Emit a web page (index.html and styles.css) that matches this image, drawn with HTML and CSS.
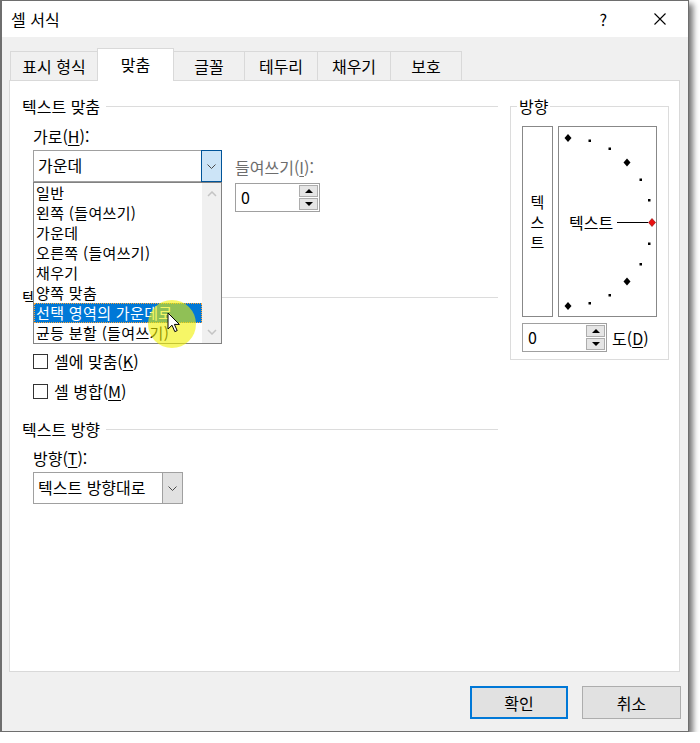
FILE: index.html
```html
<!DOCTYPE html>
<html lang="ko">
<head>
<meta charset="utf-8">
<title>셀 서식</title>
<link rel="stylesheet" href="styles.css">
</head>
<body>

<div class="dialog">
  <div class="titlebar">
    <span class="title">셀 서식</span>
    <span class="help">?</span>
    <svg class="close" width="12" height="12" viewBox="0 0 12 12"><path d="M0.5 0.5 L11.5 11.5 M11.5 0.5 L0.5 11.5" stroke="#000" stroke-width="1.1"/></svg>
  </div>

  <div class="body">
    <div class="tabs">
      <div class="tab t1">표시 형식</div>
      <div class="tab t2 active">맞춤</div>
      <div class="tab t3">글꼴</div>
      <div class="tab t4">테두리</div>
      <div class="tab t5">채우기</div>
      <div class="tab t6">보호</div>
    </div>

    <div class="panel">
      <div class="left">
        <div class="group-head"><span>텍스트 맞춤</span><i></i></div>
        <div class="sect">
          <div class="label l-h">가로(<u>H</u>):</div>
          <div class="row">
            <div class="combo-wrap">
              <div class="combo open w189">
                <span class="val">가운데</span>
                <span class="drop"><svg width="9" height="5" viewBox="0 0 9 5"><path d="M0.5 0.5 L4.5 4.5 L8.5 0.5" fill="none" stroke="#4a4a4a"/></svg></span>
              </div>

              <!-- opened dropdown, lies over the controls below -->
              <div class="listbox">
                <div class="items">
                  <div class="item">일반</div>
                  <div class="item">왼쪽 (들여쓰기)</div>
                  <div class="item">가운데</div>
                  <div class="item">오른쪽 (들여쓰기)</div>
                  <div class="item">채우기</div>
                  <div class="item">양쪽 맞춤</div>
                  <div class="item sel">선택 영역의 가운데로</div>
                  <div class="item">균등 분할 (들여쓰기)</div>
                </div>
                <div class="scroll">
                  <svg width="10" height="6" viewBox="0 0 10 6"><path d="M1 5 L5 1 L9 5" fill="none" stroke="#c4c4c4" stroke-width="1.5"/></svg>
                  <svg width="10" height="6" viewBox="0 0 10 6"><path d="M1 1 L5 5 L9 1" fill="none" stroke="#c4c4c4" stroke-width="1.5"/></svg>
                </div>
              </div>
              <div class="spot"></div>
              <svg class="pointer" width="14" height="22" viewBox="0 0 14 22"><path d="M1 1 V17 L5 13.2 L7.8 19.6 L10.2 18.6 L7.4 12.4 H12.4 Z" fill="#fff" stroke="#000" stroke-width="1" stroke-linejoin="round"/></svg>
            </div>

            <div class="indent-box">
              <div class="label disabled">들여쓰기(<u>I</u>):</div>
              <div class="spinner">
                <span class="num">0</span>
                <span class="spin"><span class="up"></span><span class="dn"></span></span>
              </div>
            </div>
          </div>
        </div>

        <div class="group-head h2"><span>텍스트 조정</span><i></i></div>
        <div class="sect">
          <div class="check c1"><span class="box"></span><span>셀에 맞춤(<u>K</u>)</span></div>
          <div class="check"><span class="box"></span><span>셀 병합(<u>M</u>)</span></div>
        </div>

        <div class="group-head h3"><span>텍스트 방향</span><i></i></div>
        <div class="sect">
          <div class="label l-t">방향(<u>T</u>):</div>
          <div class="combo w150">
            <span class="val">텍스트 방향대로</span>
            <span class="drop"><svg width="9" height="5" viewBox="0 0 9 5"><path d="M0.5 0.5 L4.5 4.5 L8.5 0.5" fill="none" stroke="#4a4a4a"/></svg></span>
          </div>
        </div>
      </div>

      <fieldset class="orient">
        <legend>방향</legend>
        <div class="orient-boxes">
          <div class="vtext"><span>텍</span><span>스</span><span>트</span></div>
          <div class="dial">
            <svg class="dial-marks" width="97" height="189" viewBox="0 0 97 189">
              <g fill="#000">
                <path d="M9 7 L12.5 11 L9 15 L5.5 11 Z"/>
                <rect x="29.5" y="12.5" width="2.5" height="2.5"/>
                <rect x="49.5" y="20.5" width="2.5" height="2.5"/>
                <path d="M68 31.5 L71.5 35.5 L68 39.5 L64.5 35.5 Z"/>
                <rect x="80.5" y="51.5" width="2.5" height="2.5"/>
                <rect x="89" y="72" width="2.5" height="2.5"/>
                <rect x="89" y="115.5" width="2.5" height="2.5"/>
                <rect x="80.5" y="136" width="2.5" height="2.5"/>
                <path d="M68 150.5 L71.5 154.5 L68 158.5 L64.5 154.5 Z"/>
                <rect x="49.5" y="167" width="2.5" height="2.5"/>
                <rect x="29.5" y="175" width="2.5" height="2.5"/>
                <path d="M9 175 L12.5 179 L9 183 L5.5 179 Z"/>
              </g>
              <path d="M58 95.5 H89" stroke="#000" stroke-width="1"/>
              <path d="M93 91.5 L96.5 95.5 L93 99.5 L89.5 95.5 Z" fill="#e81010" stroke="#8a0000" stroke-width="0.6"/>
            </svg>
            <span class="dial-text">텍스트</span>
          </div>
        </div>
        <div class="degree">
          <div class="spinner">
            <span class="num">0</span>
            <span class="spin"><span class="up"></span><span class="dn"></span></span>
          </div>
          <span class="deg-label">도(<u>D</u>)</span>
        </div>
      </fieldset>
    </div>

    <div class="actions">
      <button type="button" class="btn default">확인</button>
      <button type="button" class="btn">취소</button>
    </div>
  </div>
</div>

</body>
</html>
```

FILE: styles.css
```css
* {
  box-sizing: border-box;
}

html, body {
  margin: 0;
  background: #fff;
}

body {
  font: 16px/20px "Noto Sans CJK KR", "Noto Sans", sans-serif;
  color: #000;
}

u {
  text-decoration: underline;
  text-underline-offset: 2px;
}

/* window frame */
.dialog {
  width: 689px;
  height: 732px;
  border: 1px solid #6e6e6e;
  border-left-width: 2px;
  box-shadow: 4px 4px 6px rgba(0, 0, 0, .55);
  background: #f0f0f0;
  display: flex;
  flex-direction: column;
}

.titlebar {
  height: 36px;
  flex: none;
  background: #fff;
  display: flex;
  align-items: center;
  padding: 0 22px 0 9px;
}

.title {
  flex: 1;
}

.help {
  margin-right: 47px;
}

.close {
  display: block;
}

.body {
  flex: 1;
  padding: 11px 8px 0 7px;
}

/* tabs */
.tabs {
  display: flex;
  align-items: flex-end;
  height: 32px;
  padding-left: 1px;
}

.tab {
  height: 29px;
  border: 1px solid #d9d9d9;
  border-bottom: none;
  background: #f0f0f0;
  text-align: center;
  line-height: 28px;
  white-space: nowrap;
}

.tab + .tab {
  margin-left: -1px;
}

.tab.active {
  position: relative;
  z-index: 1;
  height: 33px;
  margin-bottom: -1px;
  background: #fff;
  line-height: 30px;
}

.t1 { width: 88px; }
.t2 { width: 77px; }
.t3 { width: 72px; }
.t4 { width: 74px; }
.t5 { width: 74px; }
.t6 { width: 72px; }

/* page */
.panel {
  height: 592px;
  border: 1px solid #d9d9d9;
  background: #fff;
  padding: 15px 10px 0 12px;
  display: grid;
  grid-template-columns: 476px 159px;
  column-gap: 12px;
  align-items: start;
}

.group-head {
  display: flex;
  align-items: center;
  height: 20px;
}

.group-head i {
  flex: 1;
  height: 1px;
  margin-left: 6px;
  background: #dcdcdc;
}

.group-head.h2 {
  margin-top: 75px;
}

.group-head.h3 {
  margin-top: 18px;
}

.sect {
  padding-left: 11px;
}

.label {
  height: 20px;
}

.l-h {
  margin-top: 10px;
  margin-bottom: 4px;
}

.l-t {
  margin-top: 9px;
  margin-bottom: 4px;
}

.disabled {
  color: #6d6d6d;
}

.row {
  display: flex;
  align-items: flex-start;
}

/* combo boxes */
.combo-wrap {
  position: relative;
}

.combo {
  display: flex;
  height: 32px;
  border: 1px solid #a0a0a0;
  background: #fff;
}

.w189 { width: 189px; }
.w150 { width: 150px; }

.combo .val {
  flex: 1;
  padding-left: 4px;
  line-height: 29px;
  white-space: nowrap;
}

.combo .drop {
  width: 20px;
  display: flex;
  align-items: center;
  justify-content: center;
  background: #e1e1e1;
  border-left: 1px solid #a0a0a0;
}

.combo.open .drop {
  width: 21px;
  margin: -1px -1px -1px 0;
  border: 1px solid #005499;
  background: #cce4f7;
}

.listbox {
  position: absolute;
  top: 32px;
  left: 0;
  z-index: 5;
  width: 189px;
  height: 162px;
  display: flex;
  border: 1px solid #828282;
  background: #fff;
}

.items {
  flex: 1;
  min-width: 0;
}

.item {
  height: 20px;
  padding-left: 2px;
  font-size: 15px;
  letter-spacing: .35px;
  white-space: nowrap;
}

.item.sel {
  background: #0078d7;
  color: #fff;
  outline: 1px dotted #ffa53a;
  outline-offset: -1px;
}

.scroll {
  width: 19px;
  flex: none;
  background: #f0f0f0;
  display: flex;
  flex-direction: column;
  align-items: center;
  justify-content: space-between;
  padding: 8px 0 8px;
}

.scroll svg {
  display: block;
}

/* pointer highlight */
.spot {
  position: absolute;
  z-index: 6;
  left: 115px;
  top: 150px;
  width: 48px;
  height: 48px;
  border-radius: 50%;
  background: rgba(240, 240, 0, .6);
}

.pointer {
  position: absolute;
  z-index: 7;
  left: 134px;
  top: 162px;
}

/* indent */
.indent-box {
  margin-left: 13px;
  margin-top: 7px;
}

.indent-box .spinner {
  margin-top: 6px;
}

.spinner {
  display: flex;
  width: 85px;
  height: 29px;
  border: 1px solid #a0a0a0;
  background: #fff;
  padding: 1px;
}

.spinner .num {
  flex: 1;
  padding-left: 4px;
  line-height: 25px;
}

.spin {
  width: 19px;
  display: flex;
  flex-direction: column;
}

.spin span {
  flex: 1;
  border: 1px solid #adadad;
  background: #e5e5e5;
  display: flex;
  align-items: center;
  justify-content: center;
}

.spin span + span {
  margin-top: 1px;
}

.spin .up::after {
  content: "";
  border-left: 4px solid transparent;
  border-right: 4px solid transparent;
  border-bottom: 4px solid #000;
}

.spin .dn::after {
  content: "";
  border-left: 4px solid transparent;
  border-right: 4px solid transparent;
  border-top: 4px solid #000;
}

/* checkboxes */
.check {
  display: flex;
  align-items: center;
  gap: 6px;
  height: 20px;
  margin-top: 10px;
}

.check.c1 {
  margin-top: 44px;
}

.box {
  width: 15px;
  height: 15px;
  border: 1px solid #333;
  background: #fff;
}

/* orientation */
.orient {
  margin: 0;
  min-width: 0;
  width: 159px;
  padding: 10px 11px 7px;
  border: 1px solid #dcdcdc;
}

.orient legend {
  padding: 0 2px;
  margin-left: -5px;
  line-height: 20px;
}

.orient-boxes {
  display: flex;
  gap: 5px;
}

.vtext {
  width: 31px;
  height: 191px;
  border: 1px solid #888;
  font-size: 15px;
  display: flex;
  flex-direction: column;
  align-items: center;
  justify-content: center;
}

.dial {
  position: relative;
  width: 99px;
  height: 191px;
  border: 1px solid #888;
}

.dial-marks {
  position: absolute;
  left: 0;
  top: 0;
}

.dial-text {
  position: absolute;
  left: 10px;
  top: 85px;
}

.degree {
  display: flex;
  align-items: center;
  margin-top: 6px;
}

.deg-label {
  margin-left: 5px;
}

/* buttons */
.actions {
  display: flex;
  justify-content: flex-end;
  gap: 14px;
  margin-top: 14px;
  margin-right: -1px;
}

.btn {
  width: 99px;
  height: 33px;
  border: 1px solid #adadad;
  background: #e1e1e1;
  font: inherit;
  color: #000;
  padding: 0;
}

.btn.default {
  width: 98px;
  border: 2px solid #0078d7;
}
```
